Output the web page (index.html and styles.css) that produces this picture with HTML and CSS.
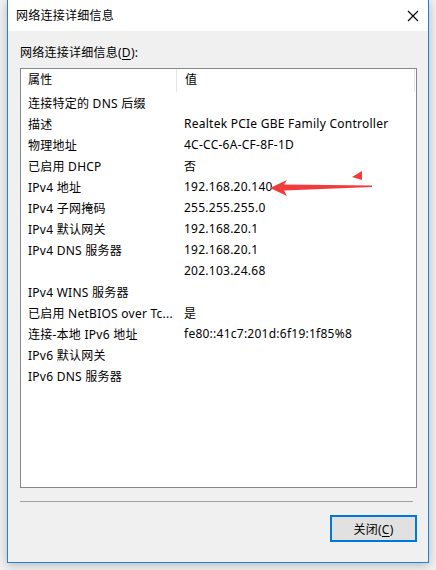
FILE: index.html
```html
<!DOCTYPE html>
<html lang="zh-CN">
<head>
  <meta charset="UTF-8" />
  <title>网络连接详细信息</title>
  <link rel="stylesheet" href="styles.css">
</head>
<body>
  <div class="window">
    <div class="titlebar">
      <span class="title">网络连接详细信息</span>
      <svg class="close" width="12" height="12" viewBox="0 0 12 12">
        <path d="M1 1 L11 11 M11 1 L1 11" stroke="#000" stroke-width="1.1" fill="none" />
      </svg>
    </div>

    <div class="content">
      <div class="label">网络连接详细信息(<u>D</u>):</div>

      <div class="listbox">
        <div class="list-head">
          <div class="col-name">属性</div>
          <div class="col-value">值</div>
          <div class="col-rest"></div>
        </div>
        <div class="row"><div class="col-name">连接特定的 DNS 后缀</div><div class="col-value"></div></div>
        <div class="row"><div class="col-name">描述</div><div class="col-value">Realtek PCIe GBE Family Controller</div></div>
        <div class="row"><div class="col-name">物理地址</div><div class="col-value">4C-CC-6A-CF-8F-1D</div></div>
        <div class="row"><div class="col-name">已启用 DHCP</div><div class="col-value">否</div></div>
        <div class="row"><div class="col-name">IPv4 地址</div><div class="col-value">192.168.20.140</div></div>
        <div class="row"><div class="col-name">IPv4 子网掩码</div><div class="col-value">255.255.255.0</div></div>
        <div class="row"><div class="col-name">IPv4 默认网关</div><div class="col-value">192.168.20.1</div></div>
        <div class="row"><div class="col-name">IPv4 DNS 服务器</div><div class="col-value">192.168.20.1</div></div>
        <div class="row"><div class="col-name"></div><div class="col-value">202.103.24.68</div></div>
        <div class="row"><div class="col-name">IPv4 WINS 服务器</div><div class="col-value"></div></div>
        <div class="row"><div class="col-name">已启用 NetBIOS over Tc...</div><div class="col-value">是</div></div>
        <div class="row"><div class="col-name">连接-本地 IPv6 地址</div><div class="col-value">fe80::41c7:201d:6f19:1f85%8</div></div>
        <div class="row"><div class="col-name">IPv6 默认网关</div><div class="col-value"></div></div>
        <div class="row"><div class="col-name">IPv6 DNS 服务器</div><div class="col-value"></div></div>

        <!-- red annotation arrow drawn over the list -->
        <svg class="arrow" width="110" height="30" viewBox="0 0 110 30">
          <polygon points="0,19 17,11 14,15.5 102,16.5 102,18 14,21.5 17,27" fill="#f23c3c" />
          <polygon points="82,8 92,2 92,11" fill="#f23c3c" />
        </svg>
      </div>

      <div class="separator"></div>

      <div class="buttons">
        <button class="btn">关闭(<u>C</u>)</button>
      </div>
    </div>
  </div>
</body>
</html>
```

FILE: styles.css
```css
html, body {
  margin: 0;
  padding: 0;
}
body {
  width: 436px;
  height: 570px;
  background: #f2f2f2;
  font-family: "Noto Sans", "Noto Sans CJK SC", sans-serif;
  font-size: 12px;
  letter-spacing: 0.25px;
  color: #000;
  padding-left: 7px;
  box-sizing: border-box;
  overflow: hidden;
}
.window {
  width: 422px;
  height: 563px;
  box-sizing: border-box;
  border: 1px solid #1883d7;
  border-top: none;
  background: #f0f0f0;
  box-shadow: 0 2px 10px rgba(0, 0, 0, 0.25);
  display: flex;
  flex-direction: column;
}
.titlebar {
  height: 31px;
  background: #fff;
  display: flex;
  align-items: center;
  justify-content: space-between;
  padding: 0 9px 0 8px;
}
.title {
  margin-top: -1px;
}
.close {
  display: block;
}
.content {
  padding: 13px 11px 0 12px;
  flex: 1;
  display: flex;
  flex-direction: column;
}
.label {
  height: 17px;
  line-height: 17px;
  margin-bottom: 7px;
}
.label u, .btn u {
  text-decoration-thickness: 1px;
  text-underline-offset: 2px;
}
.listbox {
  position: relative;
  width: 397px;
  height: 420px;
  box-sizing: border-box;
  border: 1px solid #828790;
  background: #fff;
}
.list-head, .row {
  display: flex;
  align-items: center;
}
.list-head {
  height: 23px;
}
.row {
  height: 21px;
}
.col-name {
  width: 148px;
  padding-left: 7px;
  white-space: nowrap;
  overflow: hidden;
}
.col-value {
  padding-left: 8px;
  white-space: nowrap;
}
.list-head .col-name {
  height: 23px;
  line-height: 22px;
  border-right: 1px solid #e5e5e5;
}
.list-head .col-value {
  flex: 1;
  height: 23px;
  line-height: 22px;
  border-right: 1px solid #e5e5e5;
}
.list-head .col-rest {
  width: 1px;
}
.arrow {
  position: absolute;
  left: 249px;
  top: 100px;
}
.separator {
  width: 393px;
  height: 1px;
  background: #a0a0a0;
  margin-top: 13px;
}
.buttons {
  display: flex;
  justify-content: flex-end;
  margin-top: 13px;
}
.btn {
  width: 87px;
  height: 27px;
  box-sizing: border-box;
  border: 2px solid #0078d7;
  background: #e1e1e1;
  font-family: "Noto Sans", "Noto Sans CJK SC", sans-serif;
  font-size: 12px;
  letter-spacing: 0.25px;
  color: #000;
  padding: 0;
}
```
